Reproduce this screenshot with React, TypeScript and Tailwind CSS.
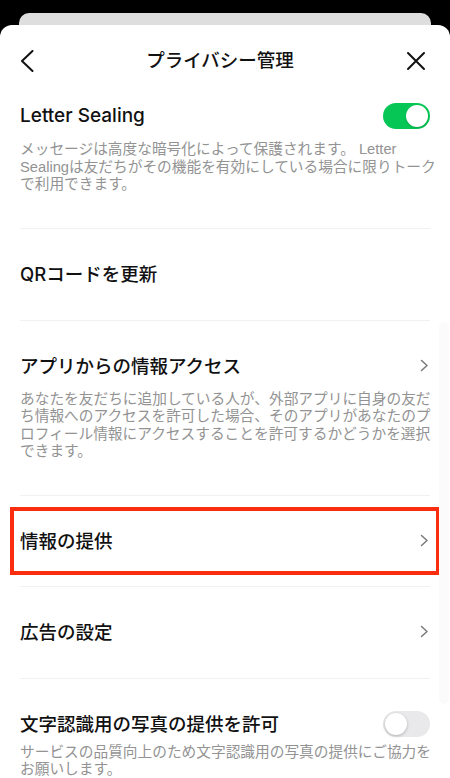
const font = { fontFamily: '"Liberation Sans", "Noto Sans CJK JP", sans-serif' }
const titleFont = { fontFamily: 'Inter, "Noto Sans CJK JP", sans-serif' }

function Chevron() {
  return (
    <svg width="9" height="13" viewBox="0 0 9 13" fill="none" className="shrink-0">
      <path d="M1.5 1.5l5.5 5-5.5 5" stroke="#7a7a7a" strokeWidth="1.5" strokeLinecap="round" strokeLinejoin="round" />
    </svg>
  )
}

function Toggle({ on }: { on: boolean }) {
  return on ? (
    <div className="flex h-[26px] w-[47px] shrink-0 items-center justify-end rounded-full bg-[#06c755] px-[2px]">
      <div className="h-[22px] w-[22px] rounded-full bg-white shadow-[0_1px_2px_rgba(0,0,0,0.2)]" />
    </div>
  ) : (
    <div className="flex h-[26px] w-[47px] shrink-0 items-center justify-start rounded-full bg-[#e9e9eb] px-[2px]">
      <div className="h-[22px] w-[22px] rounded-full bg-white shadow-[0_1px_3px_rgba(0,0,0,0.25)]" />
    </div>
  )
}

function Divider() {
  return <div className="mx-[20px] h-px bg-[#f1f1f1]" />
}

function Title({ children, className = '' }: { children: React.ReactNode; className?: string }) {
  return (
    <div style={titleFont} className={`h-[26px] text-[18.5px] font-medium leading-[26px] text-[#111111] ${className}`}>
      {children}
    </div>
  )
}

function Desc({ lines, className }: { lines: string[]; className: string }) {
  return (
    <p className={`whitespace-nowrap text-[14.7px] leading-[17.5px] text-[#939393] ${className}`}>
      {lines.map((l, i) => (
        <span key={i} className="block">{l}</span>
      ))}
    </p>
  )
}

export default function App() {
  return (
    <div className="h-[778px] overflow-hidden bg-black pt-[13px]" style={font}>
      <div className="mx-[19px] h-[12px] rounded-t-[10px] bg-[#dedede]" />
      <div className="relative rounded-t-[12px] bg-white">
        <header className="flex h-[72px] items-center justify-between px-[20px]">
          <svg width="14" height="22" viewBox="0 0 14 22" fill="none">
            <path d="M12.5 1L2 11l10.5 10" stroke="#111" strokeWidth="2" strokeLinecap="round" strokeLinejoin="round" />
          </svg>
          <h1 className="text-[18.5px] font-medium text-[#111111]">プライバシー管理</h1>
          <svg width="20" height="20" viewBox="0 0 20 20" fill="none" className="mr-[4px]">
            <path d="M2 2l16 16M18 2L2 18" stroke="#111" strokeWidth="2" strokeLinecap="round" />
          </svg>
        </header>

        <div className="px-[20px] pb-[34px] pt-[6px]">
          <div className="flex items-center justify-between">
            <Title className="text-[19px]">Letter Sealing</Title>
            <Toggle on />
          </div>
          <Desc
            className="mt-[12px]"
            lines={[
              'メッセージは高度な暗号化によって保護されます。 Letter',
              'Sealingは友だちがその機能を有効にしている場合に限りトーク',
              'で利用できます。',
            ]}
          />
        </div>
        <Divider />

        <div className="px-[20px] pb-[33px] pt-[32px]">
          <Title>QRコードを更新</Title>
        </div>
        <Divider />

        <div className="px-[20px] pb-[34px] pt-[32px]">
          <div className="flex items-center justify-between pr-[1px]">
            <Title>アプリからの情報アクセス</Title>
            <Chevron />
          </div>
          <Desc
            className="mt-[12px]"
            lines={[
              'あなたを友だちに追加している人が、外部アプリに自身の友だ',
              'ち情報へのアクセスを許可した場合、そのアプリがあなたのプ',
              'ロフィール情報にアクセスすることを許可するかどうかを選択',
              'できます。',
            ]}
          />
        </div>
        <Divider />

        <div className="px-[10px] py-[11px]">
          <div className="flex items-center justify-between border-[4px] border-[#fa2d0f] py-[17px] pl-[6px] pr-[7px]">
            <Title>情報の提供</Title>
            <Chevron />
          </div>
        </div>
        <Divider />

        <div className="flex items-center justify-between px-[20px] pb-[33px] pr-[21px] pt-[32px]">
          <Title>広告の設定</Title>
          <Chevron />
        </div>
        <Divider />

        <div className="px-[20px] pb-[30px] pt-[32px]">
          <div className="flex items-center justify-between">
            <Title>文字認識用の写真の提供を許可</Title>
            <Toggle on={false} />
          </div>
          <Desc
            className="mt-[7px]"
            lines={['サービスの品質向上のため文字認識用の写真の提供にご協力を', 'お願いします。']}
          />
        </div>

        <div className="absolute right-[1px] top-[297px] h-[382px] w-[10px] rounded-full bg-[#fbfbfb]" />
      </div>
    </div>
  )
}
